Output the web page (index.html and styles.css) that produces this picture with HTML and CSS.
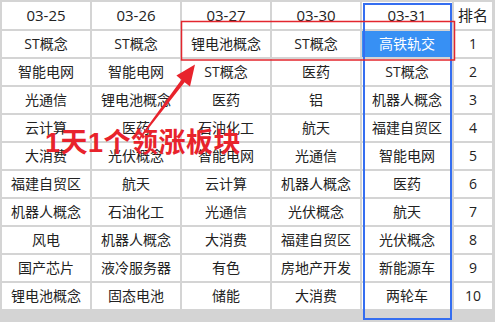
FILE: index.html
```html
<!DOCTYPE html>
<html lang="zh-CN">
<head>
<meta charset="utf-8">
<title>领涨板块</title>
<link rel="stylesheet" href="styles.css">
</head>
<body>
<div class="stage">
  <div class="board">
    <div class="cell head">03-25</div><div class="cell head">03-26</div><div class="cell head">03-27</div><div class="cell head">03-30</div><div class="cell head">03-31</div><div class="cell head">排名</div>
    <div class="cell">ST概念</div><div class="cell">ST概念</div><div class="cell">锂电池概念</div><div class="cell">ST概念</div><div class="cell hot">高铁轨交</div><div class="cell">1</div>
    <div class="cell">智能电网</div><div class="cell">智能电网</div><div class="cell">ST概念</div><div class="cell">医药</div><div class="cell">ST概念</div><div class="cell">2</div>
    <div class="cell">光通信</div><div class="cell">锂电池概念</div><div class="cell">医药</div><div class="cell">铝</div><div class="cell">机器人概念</div><div class="cell">3</div>
    <div class="cell">云计算</div><div class="cell">医药</div><div class="cell">石油化工</div><div class="cell">航天</div><div class="cell">福建自贸区</div><div class="cell">4</div>
    <div class="cell">大消费</div><div class="cell">光伏概念</div><div class="cell">智能电网</div><div class="cell">光通信</div><div class="cell">智能电网</div><div class="cell">5</div>
    <div class="cell">福建自贸区</div><div class="cell">航天</div><div class="cell">云计算</div><div class="cell">机器人概念</div><div class="cell">医药</div><div class="cell">6</div>
    <div class="cell">机器人概念</div><div class="cell">石油化工</div><div class="cell">光通信</div><div class="cell">光伏概念</div><div class="cell">航天</div><div class="cell">7</div>
    <div class="cell">风电</div><div class="cell">机器人概念</div><div class="cell">大消费</div><div class="cell">福建自贸区</div><div class="cell">光伏概念</div><div class="cell">8</div>
    <div class="cell">国产芯片</div><div class="cell">液冷服务器</div><div class="cell">有色</div><div class="cell">房地产开发</div><div class="cell">新能源车</div><div class="cell">9</div>
    <div class="cell">锂电池概念</div><div class="cell">固态电池</div><div class="cell">储能</div><div class="cell">大消费</div><div class="cell">两轮车</div><div class="cell">10</div>
  </div>
  <svg class="marks" width="495" height="322" viewBox="0 0 495 322" aria-hidden="true">
    <rect x="364" y="4" width="87" height="315" fill="none" stroke="#356ef0" stroke-width="2"/>
    <rect x="181.5" y="21.5" width="273" height="38.5" fill="none" stroke="#e3262e" stroke-width="1.5"/>
    <polygon fill="#e8232c" points="139.4,137.6 181.4,79.8 176.4,75.6 195,64.5 190,86.6 184.6,82.2 140.6,138.4"/>
  </svg>
  <div class="note">1天1个领涨板块</div>
</div>
</body>
</html>
```
FILE: styles.css
```css
html, body {
  margin: 0;
  padding: 0;
  background: #d4d4d4;
}
.stage {
  position: relative;
  width: 495px;
  height: 322px;
  overflow: hidden;
}
.board {
  display: grid;
  grid-template-columns: 88px 88px 88px 88px 90px 38px;
  grid-template-rows: 27px;
  grid-auto-rows: 26px;
  gap: 2px;
  padding: 2px;
  width: max-content;
  font-family: "Open Sans", "Noto Sans CJK SC", sans-serif;
  font-size: 14px;
  color: #222;
}
.cell {
  background: #fff;
  display: flex;
  align-items: center;
  justify-content: center;
  white-space: nowrap;
  line-height: 1;
}
.head {
  font-size: 15px;
}
.hot {
  background: #3790f4;
  color: #fff;
}
.marks {
  position: absolute;
  left: 0;
  top: 0;
}
.note {
  position: absolute;
  left: 45px;
  top: 130px;
  font-family: "Liberation Sans", "Noto Sans CJK SC", sans-serif;
  font-weight: 700;
  font-size: 27px;
  line-height: 1;
  letter-spacing: 0.5px;
  color: #e8232c;
  white-space: nowrap;
}
```
